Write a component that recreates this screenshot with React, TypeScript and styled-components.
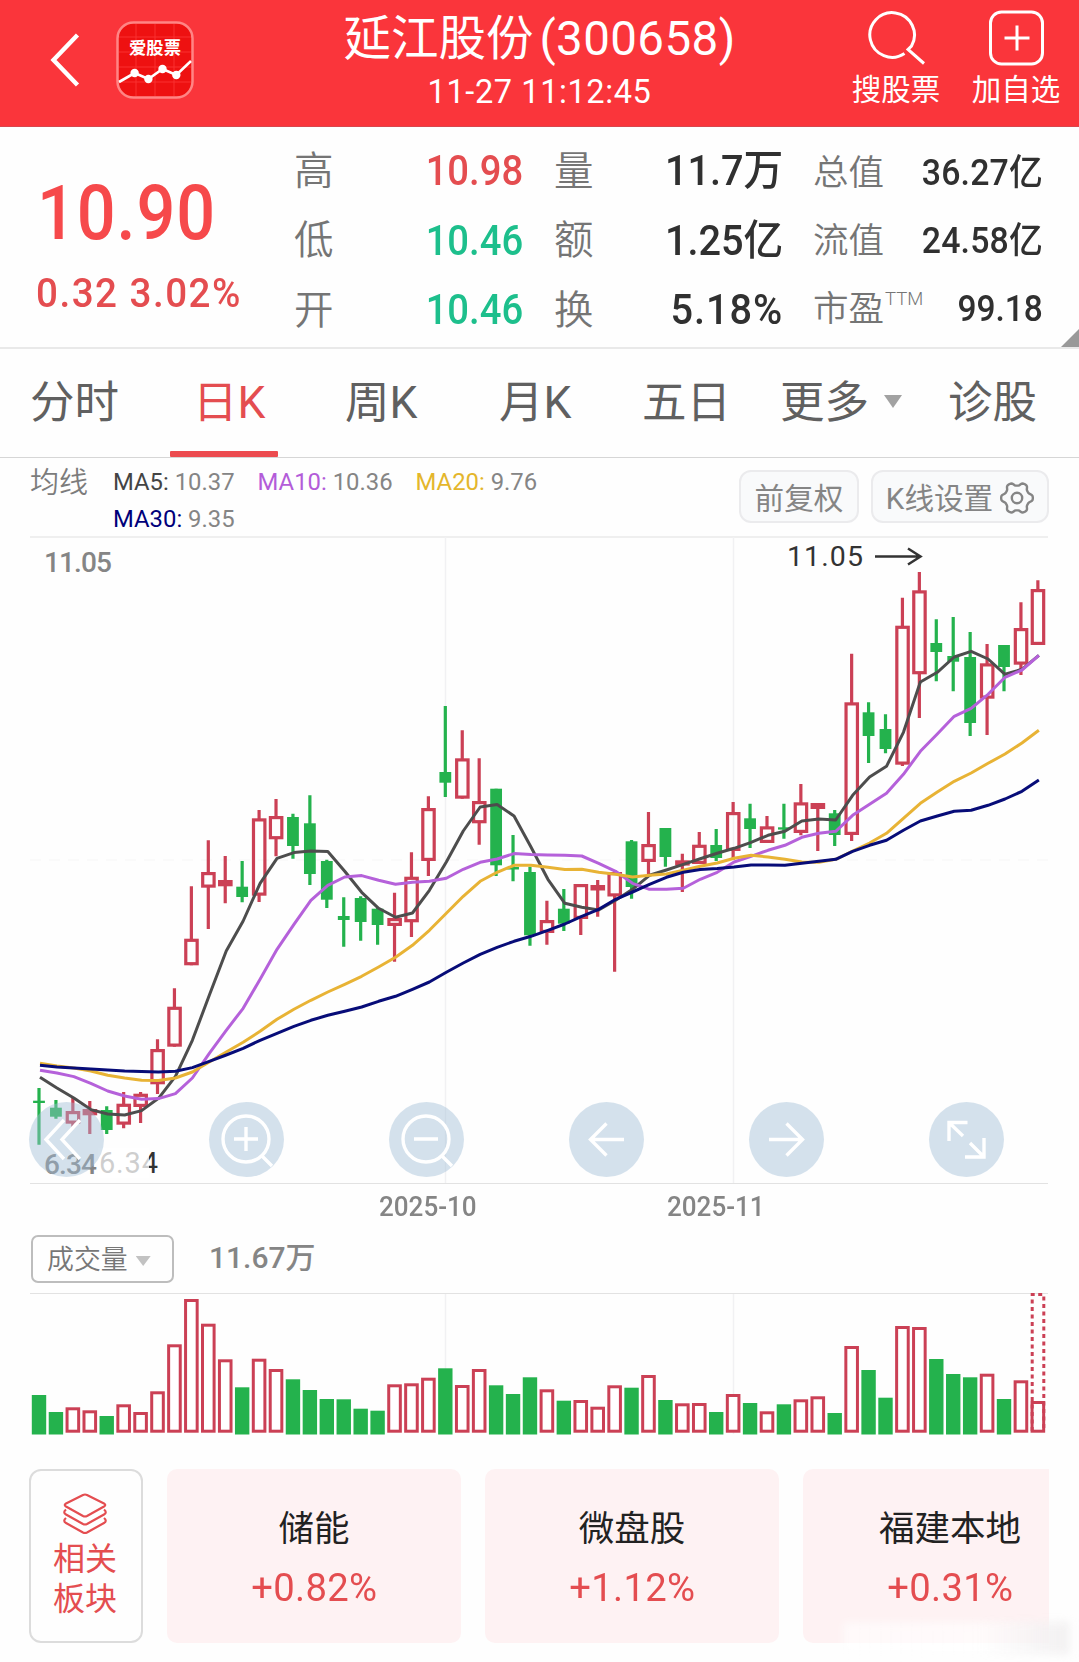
import React from "react";
import styled, { createGlobalStyle } from "styled-components";

const RED = "#f6494b";
const DARK_RED = "#e44d50";
const GREEN = "#1dbf8c";
const INK = "#303030";
const UP = "#cb4055";
const DOWN = "#24b24d";

const GlobalStyle = createGlobalStyle`
  * { box-sizing: border-box; }
  body {
    margin: 0;
    background: #fff;
    font-family: Roboto, "Noto Sans CJK SC", sans-serif;
  }
`;

const Page = styled.div`
  width: 1079px;
  height: 1662px;
  overflow: hidden;
  background: #fefefe;
  display: flex;
  flex-direction: column;
`;

/* ---------- header ---------- */

const Header = styled.header`
  height: 127px;
  flex: none;
  background: #fa353b;
  border-bottom: 1px solid #d8464d;
  color: #fff;
  display: grid;
  grid-template-columns: 116px 78px 1fr 120px 120px;
  padding-right: 3px;
`;

const BackIcon = styled.svg`
  width: 40px;
  height: 60px;
  margin: 30px 0 0 45px;
`;

const AppLogo = styled.svg`
  width: 78px;
  height: 78px;
  margin-top: 21px;
`;

const TitleBlock = styled.div`
  display: flex;
  flex-direction: column;
  align-items: center;
  padding-left: 49px;
  white-space: nowrap;
`;

const Title = styled.h1`
  margin: 8px 0 0;
  font-size: 47.5px;
  line-height: 62px;
  font-weight: 400;
  display: flex;
  gap: 6px;
`;

const Code = styled.span`
  letter-spacing: 0.4px;
`;

const Stamp = styled.div`
  padding-top: 1px;
  font-size: 32.5px;
  line-height: 42px;
  letter-spacing: 0.6px;
`;

const HeaderAction = styled.button`
  border: 0;
  background: none;
  padding: 8px 0 0;
  color: #fff;
  font: inherit;
  font-size: 29.5px;
  line-height: 40px;
  display: flex;
  flex-direction: column;
  align-items: center;
`;

const ActionIcon = styled.svg`
  width: 58px;
  height: 60px;
  margin: 0 -2px 2px 0;
`;

/* ---------- quote ---------- */

const Quote = styled.section`
  position: relative;
  height: 222px;
  flex: none;
  border-bottom: 2px solid #e9e9e9;
  display: grid;
  grid-template-columns: 294px 229px 31px 229px 30px 230px;
`;

const PriceBlock = styled.div`
  padding: 36px 0 0 36px;
  color: ${RED};
`;

const Num = styled.span<{ $size: number; $sx?: number; $origin?: string; $weight?: number; $gap?: number }>`
  display: inline-block;
  white-space: nowrap;
  font-size: ${(p) => p.$size}px;
  font-weight: ${(p) => p.$weight ?? 500};
  letter-spacing: ${(p) => p.$gap ?? 0}px;
  transform: scaleX(${(p) => p.$sx ?? 0.93});
  transform-origin: ${(p) => p.$origin ?? "right"} center;
`;

const Price = styled.div`
  line-height: 100px;
  height: 102px;
  padding-left: 1px;
`;

const Change = styled.div`
  line-height: 56px;
  color: ${DARK_RED};
`;

const StatColumn = styled.dl<{ $start: number; $top?: number }>`
  grid-column: ${(p) => p.$start};
  margin: 0;
  padding-top: ${(p) => p.$top ?? 10}px;
  display: flex;
  flex-direction: column;
`;

const StatRow = styled.div<{ $small?: boolean }>`
  height: ${(p) => (p.$small ? 68 : 69.5)}px;
  display: flex;
  align-items: center;
  justify-content: space-between;
  line-height: 60px;
  color: #757575;
  font-size: ${(p) => (p.$small ? 35.5 : 39.5)}px;
  font-weight: 350;
`;

const Term = styled.dt`
  display: flex;
`;

const Sup = styled.span`
  font-size: 18.5px;
  font-weight: 300;
  line-height: 30px;
  padding: 5px 0 0 1px;
`;

const Value = styled.dd<{ $color?: string }>`
  margin: 0;
  color: ${(p) => p.$color ?? INK};
`;

const Corner = styled.div`
  position: absolute;
  right: 0;
  bottom: 0;
  width: 18px;
  height: 18px;
  background: #999;
  clip-path: polygon(100% 0, 100% 100%, 0 100%);
`;

/* ---------- tabs ---------- */

const Tabs = styled.nav`
  height: 109px;
  flex: none;
  border-bottom: 1px solid #d6d6d6;
  padding-left: 30px;
  display: grid;
  grid-template-columns: 163px 152px 154px 143px 138px 168px 1fr;
`;

const Tab = styled.a<{ $active?: boolean }>`
  position: relative;
  display: flex;
  align-items: center;
  padding-bottom: 10px;
  font-size: 44.5px;
  color: ${(p) => (p.$active ? DARK_RED : "#606060")};
  &::after {
    content: "";
    display: ${(p) => (p.$active ? "block" : "none")};
    position: absolute;
    left: -23px;
    bottom: 0;
    width: 108px;
    height: 6px;
    border-radius: 1px;
    background: #ec4b4f;
  }
`;

const Caret = styled.i<{ $w: number; $h: number; $color: string; $gap: number; $drop?: number }>`
  width: ${(p) => p.$w}px;
  height: ${(p) => p.$h}px;
  margin-left: ${(p) => p.$gap}px;
  margin-top: ${(p) => p.$drop ?? 0}px;
  background: ${(p) => p.$color};
  clip-path: polygon(0 0, 100% 0, 50% 100%);
`;

/* ---------- averages ---------- */

const AverageBar = styled.div`
  height: 78px;
  flex: none;
  padding: 6px 30px 0;
  display: flex;
`;

const AverageTitle = styled.div`
  width: 83px;
  font-size: 29px;
  line-height: 38px;
  font-weight: 350;
  color: #7c7c7c;
`;

const AverageList = styled.div`
  width: 470px;
  display: flex;
  flex-wrap: wrap;
  align-content: flex-start;
  column-gap: 23px;
  font-size: 23.85px;
  line-height: 37px;
  color: #858585;
`;

const AverageName = styled.span<{ $color: string }>`
  color: ${(p) => p.$color};
`;

const ChipGroup = styled.div`
  margin-left: auto;
  padding-top: 6px;
  display: flex;
  gap: 12px;
`;

const Chip = styled.button<{ $w: number }>`
  width: ${(p) => p.$w}px;
  height: 53px;
  padding: 0 0 1px;
  border: 2px solid #ebebed;
  border-radius: 12px;
  background: #f9fafb;
  color: #858585;
  font: inherit;
  font-size: 29.6px;
  display: flex;
  align-items: center;
  justify-content: center;
  gap: 6px;
  white-space: nowrap;
`;

const GearIcon = styled.svg`
  width: 36px;
  height: 36px;
  margin: 3px -1px 0 0;
`;

/* ---------- charts ---------- */

const ChartPanel = styled.section`
  position: relative;
  height: 649px;
  flex: none;
`;

const ChartSvg = styled.svg`
  display: block;
  width: 1079px;
  height: 100%;
`;

const ToolRow = styled.div`
  position: absolute;
  left: 29px;
  right: 75px;
  bottom: 8px;
  display: flex;
  justify-content: space-between;
`;

const ToolButton = styled.button`
  width: 75px;
  height: 75px;
  padding: 0;
  border: 0;
  border-radius: 50%;
  background: rgba(160, 188, 214, 0.44);
`;

const ToolIcon = styled.svg`
  display: block;
  width: 75px;
  height: 75px;
`;

const DateAxis = styled.div`
  height: 44px;
  flex: none;
  display: grid;
  grid-template-columns: 288px 288px;
  padding-left: 379px;
  color: #858585;
  line-height: 44px;
`;

const VolumeHead = styled.div`
  height: 64px;
  flex: none;
  padding: 6px 0 0 31px;
  display: flex;
  color: #858585;
  line-height: 46px;
`;

const IndicatorSelect = styled.button`
  width: 143px;
  height: 48px;
  margin-right: 35px;
  padding: 2px 0 0 14px;
  border: 2px solid #bdbdbd;
  border-radius: 7px;
  background: none;
  color: #777;
  font: inherit;
  font-weight: 350;
  font-size: 26.9px;
  display: flex;
  align-items: center;
`;

const VolumePanel = styled.section`
  height: 145px;
  flex: none;
`;

/* ---------- sectors ---------- */

const SectorBar = styled.section`
  position: relative;
  padding: 31px 30px 0 29px;
  display: flex;
  gap: 24px;
`;

const SectorTitle = styled.div`
  width: 114px;
  height: 174px;
  flex: none;
  border: 2px solid #dcdcdc;
  border-radius: 12px;
  color: ${DARK_RED};
  font-size: 32px;
  line-height: 39.5px;
  display: flex;
  flex-direction: column;
  align-items: center;
  padding: 21px 2px 0 0;
`;

const LayersIcon = styled.svg`
  width: 48px;
  height: 44px;
  margin-bottom: 4px;
`;

const SectorList = styled.div`
  flex: 1;
  overflow: hidden;
  display: flex;
  gap: 24px;
`;

const SectorCard = styled.div`
  width: 294px;
  height: 174px;
  flex: none;
  border-radius: 10px;
  background: #fef2f3;
  display: flex;
  flex-direction: column;
  align-items: center;
  padding-top: 35px;
`;

const SectorName = styled.div`
  font-size: 35.5px;
  line-height: 50px;
  color: #222;
`;

const SectorChange = styled.div`
  margin-top: 6px;
  line-height: 56px;
  color: ${DARK_RED};
`;

const Smudge = styled.div`
  position: absolute;
  left: 843px;
  top: 184px;
  width: 226px;
  height: 32px;
  filter: blur(4px);
  background: linear-gradient(90deg, rgba(255, 255, 255, 0.6), rgba(255, 255, 255, 0.65) 60%, rgba(240, 238, 239, 0.85));
`;

/* ---------- data ---------- */

// [rising, high, body top, body bottom, low, volume top]
type Bar = [0 | 1, number, number, number, number, number];

const bars: Bar[] = [
  [0, 1088, 1100.7, 1103, 1144.7, 1395], [0, 1100, 1107.7, 1116.7, 1118.7, 1412],
  [1, 1098, 1111, 1123.7, 1126.7, 1407.3], [1, 1101, 1109, 1115.3, 1134, 1410.3],
  [0, 1106.3, 1110, 1130, 1134, 1416], [1, 1092, 1103.7, 1124.7, 1128.3, 1404.3],
  [1, 1092, 1093.7, 1107, 1123, 1412], [1, 1039.3, 1049, 1084.3, 1094, 1391.3],
  [1, 988.3, 1006.7, 1046.7, 1046.7, 1344.3], [1, 886.3, 938.7, 965.3, 965.3, 1299],
  [1, 840.3, 872, 887.7, 929, 1323.7], [1, 856, 880, 886.3, 903.3, 1359.3],
  [0, 861, 886.7, 897, 902.3, 1387.3], [1, 810, 818.3, 895.7, 902, 1358.7],
  [1, 799, 816, 839.3, 856.3, 1369], [0, 813.7, 817, 846, 858.7, 1379.3],
  [0, 795.3, 823.3, 874, 885, 1390], [0, 859.7, 861, 899.7, 908, 1399],
  [0, 897.3, 916, 920, 946.7, 1399.3], [0, 896.3, 898, 922, 940.7, 1408.7],
  [0, 907.7, 908.7, 925, 944.7, 1410.7], [1, 892.7, 918, 926, 961.7, 1384.3],
  [1, 852.3, 876.7, 922.3, 937, 1383.3], [1, 796.3, 808, 861, 876, 1377.7],
  [0, 706, 772, 782.7, 797, 1368.3], [1, 730.3, 758.3, 798.7, 798.7, 1385],
  [1, 758.3, 801, 823.3, 844.7, 1369], [0, 788.7, 788.7, 865.3, 876, 1385.3],
  [0, 835, 867, 869.5, 881.3, 1394], [0, 866.7, 872, 935.3, 945.7, 1377.3],
  [1, 900.7, 920, 933, 944.7, 1389.3], [0, 889, 908.7, 923.7, 931, 1400.7],
  [1, 884, 884, 919, 935, 1400], [1, 880, 885, 890.5, 916.7, 1406.7],
  [1, 870, 872, 896.5, 971.7, 1385.3], [0, 840, 841.3, 887, 898.7, 1387.7],
  [1, 812, 844, 862, 876.7, 1375], [0, 828, 828, 857, 866.7, 1400],
  [1, 853.7, 860.3, 865.6, 892, 1403.3], [1, 832, 844.7, 864, 864, 1403],
  [0, 829, 845, 858, 861, 1412], [1, 802, 812, 851, 860, 1394],
  [0, 803.7, 818.3, 829, 848, 1403], [1, 816, 826.3, 843, 843, 1411.3],
  [0, 803.7, 827.3, 829.6, 838.7, 1404.3], [1, 784, 802.3, 833, 835.3, 1399.3],
  [1, 803, 803, 809, 851, 1396.3], [0, 810, 813.3, 835, 846, 1413],
  [1, 653.7, 702.3, 835, 841, 1346], [0, 702.3, 712.3, 736, 763, 1370],
  [0, 714.3, 729, 749, 753.3, 1397.7], [1, 597.7, 625.7, 764.7, 766, 1326],
  [1, 572, 590.3, 674.3, 718, 1327], [0, 619.3, 643, 652, 681.3, 1359],
  [0, 617, 656, 661.7, 691.3, 1374], [0, 632, 657, 723, 736, 1377.3],
  [1, 644, 663.3, 698.7, 735, 1373.7], [0, 645, 645, 667, 691.3, 1399],
  [1, 602.3, 628, 664.7, 675, 1380.3], [1, 580.3, 589, 645, 645, 1401],
];

const averages = [
  { name: "MA5", value: "10.37", label: "#444", color: "#4d4d4d",
    points: [1077, 1087.7, 1097.7, 1109.3, 1113.7, 1114.7, 1110.3, 1098, 1076, 1040, 995, 950.7, 920.7, 883, 858, 852.3, 850.7, 851.3, 871, 892, 908, 917, 912.7, 890, 861.7, 830.7, 806.7, 804.3, 815.7, 846.7, 879, 903, 907, 909.7, 900, 889, 875, 869.7, 864, 858.5, 853, 848, 842, 835, 831, 820.7, 818.7, 819.7, 795, 776.7, 766, 732, 681.7, 672, 656.7, 651, 658.7, 674, 669, 655] },
  { name: "MA10", value: "10.36", label: "#b35cd9", color: "#b561da",
    points: [1070, 1072.7, 1076.3, 1083, 1090.7, 1095.7, 1099, 1098.3, 1093.3, 1077.7, 1053, 1030, 1008, 979, 949, 924, 900, 885, 876.7, 875.3, 880, 884, 882, 881, 878, 869, 862, 858.7, 853.3, 854.3, 854.7, 855, 855.7, 863, 871, 883, 889, 889, 888, 879, 872, 861.7, 856, 850, 845, 837, 833, 831, 815, 804, 793, 774, 751, 733.7, 716, 708, 694, 677, 669.7, 655] },
  { name: "MA20", value: "9.76", label: "#e4b62c", color: "#e8b335",
    points: [1063, 1065.7, 1067.7, 1070.7, 1075, 1077.7, 1080, 1080.3, 1077.7, 1071.7, 1061.7, 1051.7, 1042, 1031, 1019, 1009, 1000, 991.7, 984, 976, 966.7, 957, 945, 930, 913, 896, 881, 872, 865, 865, 867, 869.3, 869, 872, 874, 876.7, 875, 873.7, 870, 866, 862.7, 858, 855, 856.7, 859, 861.7, 862, 859, 850.7, 842.7, 833, 818, 803, 791.7, 781, 772.7, 763, 753.7, 742.7, 730] },
  { name: "MA30", value: "9.35", label: "#00007a", color: "#070c78",
    points: [1065, 1066.7, 1067.7, 1068.7, 1069.7, 1070.7, 1071.3, 1071.7, 1071, 1067.3, 1061, 1054.7, 1048, 1040, 1033, 1026, 1020, 1015, 1011, 1006.7, 1001, 996, 989, 981.7, 972, 962.7, 954, 947, 941, 936, 930, 923.7, 916, 909, 899, 891.7, 884, 877, 872, 869.3, 868.3, 866.7, 864.7, 864.7, 865, 863, 861, 859, 851, 845, 840, 830, 820.7, 815.7, 811, 810, 805, 798.7, 791, 779.7] },
];

const xAt = (i: number) => 39 + 16.93 * i;

const gearPath = (() => {
  const pts: string[] = [];
  for (let a = 0; a < 360; a += 4) {
    const t = (a * Math.PI) / 180;
    const r = 14.1 + 1.9 * Math.tanh(1.6 * Math.cos(6 * t));
    pts.push(`${(18 + r * Math.cos(t)).toFixed(2)} ${(18 + r * Math.sin(t)).toFixed(2)}`);
  }
  return `M${pts.join("L")}Z`;
})();

const toolDrawings = [
  <path key="first" d="M35 18 17 37.500 35 57M51 18 33 37.500 51 57" />,
  <g key="in"><circle cx="37" cy="37" r="23" /><path d="M25 37H49M37 25V49M53 54 63 64" /></g>,
  <g key="out"><circle cx="37" cy="37" r="23" /><path d="M25 37H49M53 54 63 64" /></g>,
  <path key="left" d="M55 37.500H21M37.500 21.500 21.500 37.500 37.500 53.500" />,
  <path key="right" d="M20 37.500H54M37.500 21.500 53.500 37.500 37.500 53.500" />,
  <path key="full" d="M20 39V20.500H38.500M20 20.500 34 34M55 36V55H36M55 55 41 41" />,
];

const sectors = [
  { name: "储能", change: "+0.82%" },
  { name: "微盘股", change: "+1.12%" },
  { name: "福建本地", change: "+0.31%" },
];

function Candle({ bar, x }: { bar: Bar; x: number }) {
  const [rising, high, top, bottom, low] = bar;
  const color = rising ? UP : DOWN;
  const solid = bottom - top < 6.1;
  return (
    <g>
      <path d={`M${x} ${high}V${top + 1}M${x} ${bottom - 1}V${low}`} stroke={color} strokeWidth="3.200" />
      {rising ? (
        <rect x={x - 5.6} y={top + 1.6} width="11.400" height={Math.max(1, bottom - top - 3.2)}
          fill={solid ? color : "none"} stroke={color} strokeWidth="3.200" />
      ) : (
        <rect x={x - 5.9} y={top} width="11.800" height={bottom - top} fill={color} />
      )}
    </g>
  );
}

function PriceChart() {
  return (
    <ChartSvg viewBox="0 536 1079 649">
      <path d="M30 537H1048" stroke="#efefef" strokeWidth="2" />
      <path d="M30 1183.500H1048" stroke="#e2e2e2" />
      <path d="M445.500 537V1183M733.500 537V1183" stroke="#f1f1f3" strokeWidth="1.500" />
      <path d="M30 860H1048" stroke="#f6f6f6" strokeDasharray="11 8" />
      {bars.map((b, i) => <Candle key={i} bar={b} x={xAt(i)} />)}
      {averages.map((a) => (
        <polyline key={a.name} fill="none" stroke={a.color} strokeWidth="3" strokeLinejoin="round"
          points={a.points.map((y, i) => `${xAt(i) + 1},${y + 0.3}`).join(" ")} />
      ))}
      <text x="44" y="572" fontSize="28" fontWeight="500" fill="#858585" textLength="68">11.05</text>
      <text x="44" y="1174" fontSize="28" fontWeight="500" fill="#858585" textLength="53">6.34</text>
      <text x="99" y="1173" fontSize="29" fill="#333" textLength="59">6.34</text>
      <rect x="98" y="1148" width="51" height="30" fill="#fff" fillOpacity="0.760" />
      <text x="787" y="565.500" fontSize="28.500" fill="#333" textLength="76">11.05</text>
      <path d="M875 556.500H920.500M908 548.500 920.500 556.500 908 564.500" fill="none" stroke="#333" strokeWidth="2.500" />
    </ChartSvg>
  );
}

function VolumeChart() {
  return (
    <ChartSvg viewBox="0 1293 1079 145">
      <path d="M30 1293.500H1048" stroke="#e2e2e2" />
      <path d="M445.500 1294V1434M733.500 1294V1434" stroke="#f1f1f3" strokeWidth="1.500" />
      {bars.map(([rising, , , , , top], i) =>
        rising ? (
          <rect key={i} x={xAt(i) - 5.8} y={top + 1.5} width="11.600" height={1431.2 - top - 1.5}
            fill={i === bars.length - 1 ? "none" : "#fff"} stroke={UP} strokeWidth="3" />
        ) : (
          <rect key={i} x={xAt(i) - 7.2} y={top} width="14.400" height={1434.5 - top} fill={DOWN} />
        )
      )}
      <path d="M1032.200 1431V1294.500H1043.800V1431" fill="none" stroke={UP} strokeWidth="3" strokeDasharray="4 3.500" />
    </ChartSvg>
  );
}

export default function App() {
  return (
    <Page>
      <GlobalStyle />
      <Header>
        <BackIcon viewBox="0 0 40 60" fill="none" stroke="#fff" strokeWidth="4.400">
          <path d="M32.500 5 8.500 30 32.500 55" />
        </BackIcon>
        <AppLogo viewBox="0 0 78 78">
          <rect x="1.500" y="1.500" width="75" height="75" rx="16" fill="#ee1111" stroke="#ff8585" strokeWidth="2.500" />
          <path d="M20 3V75M39 3V75M58 3V75M3 16H75M3 31H75M3 46H75M3 61H75" stroke="#fa3131" strokeWidth="1" />
          <text x="39" y="32.500" textAnchor="middle" fill="#fff" fontSize="17.300" fontWeight="700">爱股票</text>
          <path d="M3 61 18.600 52 32.400 58 46.500 48 60.300 54 75 40" fill="none" stroke="#fff" strokeWidth="2.600" />
          <g fill="#fff">
            <circle cx="18.600" cy="52" r="4.200" /><circle cx="32.400" cy="58" r="4.200" />
            <circle cx="46.500" cy="48" r="4.200" /><circle cx="60.300" cy="54" r="4.200" />
          </g>
        </AppLogo>
        <TitleBlock>
          <Title><span>延江股份</span><Code>(300658)</Code></Title>
          <Stamp>11-27 11:12:45</Stamp>
        </TitleBlock>
        <HeaderAction>
          <ActionIcon viewBox="0 0 58 60" fill="none" stroke="#fff" strokeWidth="3">
            <path d="M36.500 45.500A22.300 22.300 0 1 1 43.500 38L40 41.500 56 55.500" />
          </ActionIcon>
          搜股票
        </HeaderAction>
        <HeaderAction>
          <ActionIcon viewBox="0 0 58 60" fill="none" stroke="#fff" strokeWidth="3">
            <rect x="2.500" y="4" width="52" height="52" rx="11" />
            <path d="M16.500 30H41.500M29 17.500V42.500" />
          </ActionIcon>
          加自选
        </HeaderAction>
      </Header>

      <Quote>
        <PriceBlock>
          <Price><Num $size={76} $origin="left" $sx={0.9} $gap={1}>10.90</Num></Price>
          <Change><Num $size={41.500} $origin="left" $sx={0.93} $gap={1.6}>0.32 3.02%</Num></Change>
        </PriceBlock>
        <StatColumn $start={2}>
          <StatRow><Term>高</Term><Value $color={DARK_RED}><Num $size={42} $sx={0.91}>10.98</Num></Value></StatRow>
          <StatRow><Term>低</Term><Value $color={GREEN}><Num $size={42} $sx={0.91}>10.46</Num></Value></StatRow>
          <StatRow><Term>开</Term><Value $color={GREEN}><Num $size={42} $sx={0.91}>10.46</Num></Value></StatRow>
        </StatColumn>
        <StatColumn $start={4}>
          <StatRow><Term>量</Term><Value><Num $size={42} $sx={0.945}>11.7万</Num></Value></StatRow>
          <StatRow><Term>额</Term><Value><Num $size={42} $sx={0.945}>1.25亿</Num></Value></StatRow>
          <StatRow><Term>换</Term><Value><Num $size={42} $sx={0.945} $gap={1}>5.18%</Num></Value></StatRow>
        </StatColumn>
        <StatColumn $start={6} $top={12}>
          <StatRow $small><Term>总值</Term><Value><Num $size={36} $sx={0.94} $gap={0.2}>36.27亿</Num></Value></StatRow>
          <StatRow $small><Term>流值</Term><Value><Num $size={36} $sx={0.94} $gap={0.2}>24.58亿</Num></Value></StatRow>
          <StatRow $small><Term>市盈<Sup>TTM</Sup></Term><Value><Num $size={36} $sx={0.93}>99.18</Num></Value></StatRow>
        </StatColumn>
        <Corner />
      </Quote>

      <Tabs>
        <Tab>分时</Tab>
        <Tab $active>日K</Tab>
        <Tab>周K</Tab>
        <Tab>月K</Tab>
        <Tab>五日</Tab>
        <Tab>更多<Caret $w={18} $h={13} $gap={15} $drop={7} $color="#a2a2a2" /></Tab>
        <Tab>诊股</Tab>
      </Tabs>

      <AverageBar>
        <AverageTitle>均线</AverageTitle>
        <AverageList>
          {averages.map((a) => (
            <span key={a.name}><AverageName $color={a.label}>{a.name}:</AverageName> {a.value}</span>
          ))}
        </AverageList>
        <ChipGroup>
          <Chip $w={120}>前复权</Chip>
          <Chip $w={178}>
            K线设置
            <GearIcon viewBox="0 0 36 36" fill="none" stroke="#858585" strokeWidth="2.400">
              <path d={gearPath} /><circle cx="18" cy="18" r="5.200" />
            </GearIcon>
          </Chip>
        </ChipGroup>
      </AverageBar>

      <ChartPanel>
        <PriceChart />
        <ToolRow>
          {toolDrawings.map((d, i) => (
            <ToolButton key={i}>
              <ToolIcon viewBox="0 0 75 75" fill="none" stroke="#fff" strokeWidth="3.400">{d}</ToolIcon>
            </ToolButton>
          ))}
        </ToolRow>
      </ChartPanel>

      <DateAxis>
        <Num $size={28} $origin="left" $sx={0.93}>2025-10</Num>
        <Num $size={28} $origin="left" $sx={0.93}>2025-11</Num>
      </DateAxis>

      <VolumeHead>
        <IndicatorSelect>成交量<Caret $w={15} $h={10} $gap={8} $drop={2} $color="#c2c2c2" /></IndicatorSelect>
        <Num $size={30} $origin="left" $sx={1}>11.67万</Num>
      </VolumeHead>

      <VolumePanel><VolumeChart /></VolumePanel>

      <SectorBar>
        <SectorTitle>
          <LayersIcon viewBox="0 0 48 44" fill="none" stroke={DARK_RED} strokeWidth="2.200" strokeLinejoin="round">
            <path d="M22 3Q24 2 26 3L43 11.500Q45.500 13 43 14.500L26 24Q24 25 22 24L5 14.500Q2.500 13 5 11.500Z" />
            <path d="M5 17.500Q1.500 20.500 5 22.500L22 32Q24 33 26 32L43 22.500Q46.500 20.500 43 17.500" />
            <path d="M5 26Q1.500 29 5 31L22 40.500Q24 41.500 26 40.500L43 31Q46.500 29 43 26" />
          </LayersIcon>
          <span>相关</span>
          <span>板块</span>
        </SectorTitle>
        <SectorList>
          {sectors.map((s) => (
            <SectorCard key={s.name}>
              <SectorName>{s.name}</SectorName>
              <SectorChange><Num $size={39} $origin="center" $sx={0.98} $weight={400} $gap={0.3}>{s.change}</Num></SectorChange>
            </SectorCard>
          ))}
        </SectorList>
        <Smudge />
      </SectorBar>
    </Page>
  );
}
